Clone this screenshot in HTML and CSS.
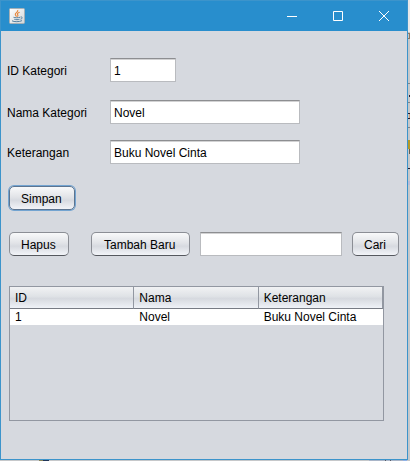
FILE: index.html
```html
<!DOCTYPE html>
<html lang="id">
<head>
<meta charset="utf-8">
<title>Kategori</title>
<link rel="stylesheet" href="styles.css">
</head>
<body>
<main class="window">
  <header class="titlebar">
    <svg class="app-icon" viewBox="0 0 16 16" role="img" aria-label="Java">
      <defs>
        <linearGradient id="tile" x1="0" y1="0" x2="1" y2="1">
          <stop offset="0" stop-color="#fff"/>
          <stop offset="1" stop-color="#d2d6d8"/>
        </linearGradient>
      </defs>
      <rect x=".5" y=".5" width="15" height="15" rx="1" fill="url(#tile)" stroke="#a5b0b6"/>
      <path d="M8.7 2C9.8 4 5.800 5 6.300 6.600C6.500 7.500 7.500 7.800 7.400 8.700M10.600 4.200C8.300 5 8 5.900 8.800 6.800C9.300 7.500 8.900 8 8.400 8.600" fill="none" stroke="#e58439" stroke-width="1.100"/>
      <path d="M4.500 9.300C6 9.900 9 9.900 11 9.300M5.300 11.300C7 11.800 9 11.800 10.500 11.300M3 12.800C5 14 10.500 14 13 12.600M11.500 9C14 8.600 13.500 10.800 11.500 11.200" fill="none" stroke="#5580a0" stroke-width="1"/>
    </svg>
    <div class="window-controls">
      <button class="window-button" type="button" aria-label="Minimize"><svg class="glyph" viewBox="0 0 12 12"><path d="M1 6.500h10"/></svg></button>
      <button class="window-button" type="button" aria-label="Maximize"><svg class="glyph" viewBox="0 0 12 12"><path d="M1.500 1.500h9v9h-9z"/></svg></button>
      <button class="window-button" type="button" aria-label="Close"><svg class="glyph" viewBox="0 0 12 12"><path d="M1 1l10 10M11 1L1 11"/></svg></button>
    </div>
  </header>
  <div class="content">
    <form class="form">
      <div class="row row-first">
        <label class="label" for="id">ID Kategori</label>
        <input class="field field-short" id="id" type="text" value="1">
      </div>
      <div class="row">
        <label class="label" for="name">Nama Kategori</label>
        <input class="field field-long" id="name" type="text" value="Novel">
      </div>
      <div class="row">
        <label class="label" for="info">Keterangan</label>
        <input class="field field-long" id="info" type="text" value="Buku Novel Cinta">
      </div>
      <button class="button button-default" type="button">Simpan</button>
    </form>
    <div class="toolbar">
      <button class="button button-delete" type="button">Hapus</button>
      <button class="button button-wide" type="button">Tambah Baru</button>
      <input class="field search" type="text" aria-label="Cari kategori">
      <button class="button" type="button">Cari</button>
    </div>
    <div class="table-pane">
      <table class="table">
        <thead>
          <tr><th>ID</th><th>Nama</th><th>Keterangan</th></tr>
        </thead>
        <tbody>
          <tr><td>1</td><td>Novel</td><td>Buku Novel Cinta</td></tr>
        </tbody>
      </table>
    </div>
  </div>
</main>
<svg class="backdrop-edge" viewBox="0 0 2 461" preserveAspectRatio="xMinYMin" aria-hidden="true">
  <path fill="#e8e8e8" d="M0 0h2v32H0z"/>
  <path fill="#8d7864" d="M0 33h2v1H0zM1 34h1v4H1zM0 38h2v1H0z"/>
  <path fill="#808488" d="M0 83h2v1H0zM0 102h2v1H0zM0 127h2v1H0z"/>
  <path fill="#241a30" d="M1 95h1v2H1zM0 113h2v1H0zM0 118h2v1H0zM0 168h2v1H0z"/>
  <path fill="#c49a78" d="M1 114h1v4H1z"/>
  <path fill="#b69a28" d="M0 140h2v9H0z"/>
  <path fill="#665f50" d="M1 149h1v5H1z"/>
  <path fill="#b8bcd8" d="M0 181h2v4H0z"/>
</svg>
<svg class="backdrop-bottom" viewBox="0 0 410 1" preserveAspectRatio="xMinYMin" aria-hidden="true">
  <path fill="#88845a" d="M39 0h4v1h-4z"/>
  <path fill="#203558" d="M43 0h6v1h-6z"/>
  <path fill="#a9b5c8" d="M369 0h34v1h-34z"/>
  <path fill="#555b66" d="M385 0h1v1h-1zM390 0h1v1h-1z"/>
  <path fill="#91b2e6" d="M403 0h4v1h-4z"/>
</svg>
</body>
</html>
```
FILE: styles.css
```css
* {
  box-sizing: border-box;
}

body {
  display: flex;
  min-height: 100vh;
  margin: 0;
  padding: 0 2px 1px 0;
  position: relative;
  background: #c6c8ca;
  color: #000;
  font: 12px/16px "Liberation Sans", Arial, sans-serif;
}

button,
input {
  margin: 0;
  color: inherit;
  font: inherit;
}

.window {
  display: flex;
  flex: 1;
  flex-direction: column;
  min-width: 0;
  border: 1px solid #3c94cb;
  background: #d6d9df;
}

.titlebar {
  display: flex;
  align-items: center;
  justify-content: space-between;
  height: 30px;
  padding-left: 8px;
  background: #288ecd;
}

.app-icon {
  width: 16px;
  height: 16px;
}

.window-controls {
  display: flex;
}

.window-button {
  display: flex;
  align-items: center;
  justify-content: center;
  width: 46px;
  height: 28px;
  padding: 0;
  border: 0;
  background: none;
}

.glyph {
  width: 12px;
  height: 12px;
  fill: none;
  stroke: #fff;
}

.content {
  display: flex;
  flex: 1;
  flex-direction: column;
  padding: 27px 8px 38px;
}

.row {
  display: flex;
  align-items: center;
  margin-bottom: 16px;
}

.row-first {
  margin-bottom: 18px;
}

.label {
  width: 103px;
  margin-left: -2px;
  padding-top: 2px;
}

.field {
  height: 24px;
  padding: 3px 3px 2px;
  border: 1px solid #b9bbbf;
  border-top-color: #8d8e91;
  border-radius: 0;
  outline: 0;
  background: #fff;
  box-shadow: inset 0 1px #d2d2d3;
}

.field-short {
  width: 66px;
}

.field-long {
  width: 190px;
}

.button {
  height: 24px;
  padding: 2px 12px 0 11px;
  border: 1px solid #8b8e95;
  border-bottom-color: #55585e;
  border-radius: 5px;
  background: linear-gradient(#f8f9fa, #e2e4e8 45%, #d7dae0 60%, #f2f4f8);
  white-space: nowrap;
}

.form {
  padding-bottom: 22px;
}

.form .row:nth-child(3) {
  margin-bottom: 22px;
}

.button-default {
  display: block;
  border-color: #5c7490;
  box-shadow: 0 0 0 1px #73a4d1;
}

.toolbar {
  display: flex;
  gap: 10px;
}

.button-delete {
  margin-right: 12px;
}

.button-wide {
  min-width: 99px;
}

.search {
  flex: 1;
  width: 0;
  min-width: 0;
}

.table-pane {
  flex: 1;
  margin: 30px 15px 0 0;
  border: 1px solid #9297a1;
}

.table {
  width: 100%;
  border-collapse: separate;
  border-spacing: 0;
  table-layout: fixed;
}

.table th {
  height: 22px;
  padding: 1px 5px 0;
  border-right: 1px solid #9297a1;
  border-bottom: 1px solid #777b84;
  background: linear-gradient(#f1f2f4, #dfe2e6 45%, #d6d9df 55%, #eff2f7);
  font-weight: normal;
  text-align: left;
}

.table td {
  height: 16px;
  padding: 1px 5px 0;
  background: #fff;
  line-height: 15px;
}

.backdrop-edge {
  position: absolute;
  top: 0;
  right: 0;
  width: 2px;
  height: 461px;
}

.backdrop-bottom {
  position: absolute;
  bottom: 0;
  left: 0;
  width: 410px;
  height: 1px;
}
```
